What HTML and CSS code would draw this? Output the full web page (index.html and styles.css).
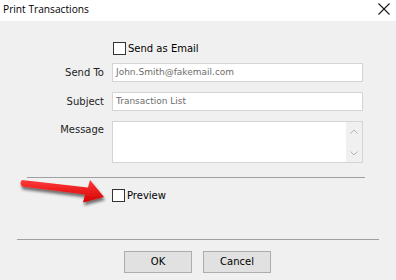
FILE: index.html
```html
<!DOCTYPE html>
<html>
    <head>
        <title>Print Transactions</title>
        <link rel="stylesheet" href="styles.css">
    </head>
    <body>
        <div class="titleBar">
            <span class="titleText">Print Transactions</span>
            <svg class="closeIcon" width="12" height="12" viewBox="0 0 12 12">
                <path d="M0.5 0.5 L11.5 11.5 M11.5 0.5 L0.5 11.5" stroke="#1a1a1a" stroke-width="1.1" fill="none"/>
            </svg>
        </div>

        <div class="dialog">
            <label class="check emailCheck">
                <span class="box"></span>Send as Email
            </label>

            <div class="fields">
                <div class="fieldLabel">Send To</div>
                <div class="input">John.Smith@fakemail.com</div>

                <div class="fieldLabel">Subject</div>
                <div class="input">Transaction List</div>

                <div class="fieldLabel msgLabel">Message</div>
                <div class="textArea">
                    <div class="scrollBar">
                        <svg width="8" height="5" viewBox="0 0 8 5"><path d="M0.5 4.5 L4 1 L7.5 4.5" stroke="#b4b4b4" fill="none"/></svg>
                        <svg width="8" height="5" viewBox="0 0 8 5"><path d="M0.5 0.5 L4 4 L7.5 0.5" stroke="#b4b4b4" fill="none"/></svg>
                    </div>
                </div>
            </div>

            <div class="rule ruleShort"></div>

            <div class="previewRow">
                <svg class="arrow" width="96" height="34" viewBox="0 0 96 34">
                    <defs>
                        <filter id="shadow" x="-10%" y="-30%" width="130%" height="180%">
                            <feDropShadow dx="1" dy="3" stdDeviation="1.6" flood-color="#000" flood-opacity="0.55"/>
                        </filter>
                        <linearGradient id="red" x1="0" y1="0" x2="0" y2="1">
                            <stop offset="0" stop-color="#ff3a3a"/>
                            <stop offset="1" stop-color="#d40000"/>
                        </linearGradient>
                    </defs>
                    <path filter="url(#shadow)" fill="url(#red)"
                          d="M10 4 Q7 7 10 10.5 L73 18.5 L71 26.5 L92 21 L78 4 L76 11.5 Z"/>
                </svg>
                <label class="check">
                    <span class="box"></span>Preview
                </label>
            </div>

            <div class="rule ruleLong"></div>

            <div class="buttons">
                <div class="button">OK</div>
                <div class="button">Cancel</div>
            </div>
        </div>
    </body>
</html>
```

FILE: styles.css
```css
body {
    margin: 0;
    width: 396px;
    height: 280px;
    overflow: hidden;
    background-color: #f0f0f0;
    font-family: "DejaVu Sans", sans-serif;
    font-size: 10px;
    color: #000;
}
.titleBar {
    height: 21px;
    background-color: #fff;
    display: flex;
    align-items: center;
    justify-content: space-between;
    padding: 0 6px 0 3px;
}
.titleText {
    font-family: "Open Sans", sans-serif;
    font-size: 10.2px;
    color: #000;
    margin-top: -4px;
}
.closeIcon {
    margin-top: -4px;
}
.dialog {
    display: flex;
    flex-direction: column;
}
.check {
    display: flex;
    align-items: center;
    gap: 2px;
    height: 13px;
}
.box {
    width: 11px;
    height: 11px;
    border: 1px solid #333;
    background-color: #fff;
}
.emailCheck {
    margin: 21px 0 0 113px;
}
.fields {
    display: grid;
    grid-template-columns: 104px 251px;
    grid-auto-rows: auto;
    column-gap: 8px;
    row-gap: 10px;
    margin-top: 8px;
}
.fieldLabel {
    text-align: right;
    align-self: center;
    color: #1e1e1e;
}
.msgLabel {
    align-self: start;
    padding-top: 3px;
}
.input {
    height: 17px;
    border: 1px solid #d4d4d4;
    background-color: #fff;
    color: #6d6d6d;
    padding-left: 3px;
    line-height: 17px;
    font-size: 9px;
}
.textArea {
    height: 40px;
    border: 1px solid #d4d4d4;
    background-color: #fff;
    display: flex;
    justify-content: flex-end;
}
.scrollBar {
    width: 16px;
    background-color: #f0f0f0;
    display: flex;
    flex-direction: column;
    justify-content: space-between;
    align-items: center;
    padding: 7px 0 6px 0;
}
.rule {
    height: 1px;
    background-color: #a0a0a0;
}
.ruleShort {
    margin: 14px 0 0 27px;
    width: 338px;
}
.previewRow {
    position: relative;
    margin: 11px 0 0 112px;
}
.arrow {
    position: absolute;
    left: -100px;
    top: -13px;
}
.ruleLong {
    margin: 37px 0 0 17px;
    width: 362px;
}
.buttons {
    display: flex;
    gap: 11px;
    margin: 11px 0 0 124px;
}
.button {
    width: 66px;
    height: 20px;
    border: 1px solid #adadad;
    background-color: #e1e1e1;
    text-align: center;
    line-height: 20px;
    color: #000;
}
```
